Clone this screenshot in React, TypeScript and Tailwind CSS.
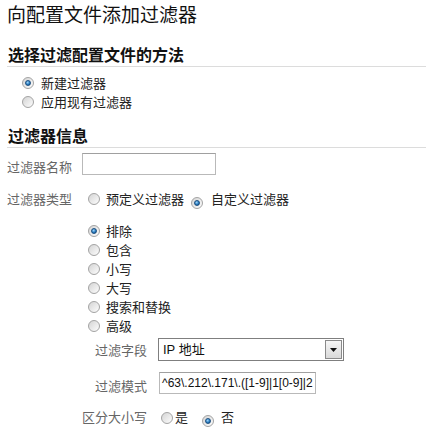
import React from "react";

function Radio({ checked }: { checked?: boolean }) {
  return (
    <span className="relative inline-flex h-[12px] w-[12px] shrink-0 items-center justify-center rounded-full border border-[#a3a3a3] bg-[linear-gradient(135deg,#d4d4d4,#fdfdfd)]">
      {checked && (
        <span className="h-[6px] w-[6px] rounded-full border border-[#1d4f80] bg-[radial-gradient(circle_at_40%_35%,#9fd4f7,#2a7fc4_55%,#0b3e6e)]" />
      )}
    </span>
  );
}

function Option({ checked, label }: { checked?: boolean; label: string }) {
  return (
    <div className="flex h-[19px] items-center">
      <Radio checked={checked} />
      <span className="ml-[6px] text-[13px] leading-[19px] text-[#222]">{label}</span>
    </div>
  );
}

export default function App() {
  const font = { fontFamily: '"Noto Sans CJK SC", "Liberation Sans", sans-serif' };
  return (
    <div className="h-[432px] w-[426px] overflow-hidden bg-white" style={font}>
      <h1 className="h-[28px] pl-[7px] text-[19px] leading-[28px] text-[#111]">
        向配置文件添加过滤器
      </h1>

      <h2 className="ml-[7px] mt-[16px] border-b border-[#dcdcdc] pb-[2px] pl-px text-[16px] font-bold leading-[20px] text-[#111]">
        选择过滤配置文件的方法
      </h2>
      <div className="mt-[6px] pl-[22px]">
        <div className="flex h-[19px] items-center">
          <Radio checked />
          <span className="ml-[7px] text-[13px] leading-[19px] text-[#222]">新建过滤器</span>
        </div>
        <div className="flex h-[19px] items-center">
          <Radio />
          <span className="ml-[7px] text-[13px] leading-[19px] text-[#222]">应用现有过滤器</span>
        </div>
      </div>

      <h2 className="ml-[7px] mt-[14px] border-b border-[#dcdcdc] pb-[2px] pl-px text-[16px] font-bold leading-[20px] text-[#111]">
        过滤器信息
      </h2>

      <div className="pl-[7px]">
        <div className="mt-[5px] flex items-start">
          <label className="w-[75px] pt-[3px] text-[13px] leading-[22px] text-[#666]">过滤器名称</label>
          <input
            className="h-[22px] w-[134px] border border-[#b9b9b9] border-t-[#a0a0a0] px-1 text-[13px] outline-none"
            type="text"
          />
        </div>

        <div className="mt-[11px] flex h-[19px] items-center">
          <label className="w-[81px] text-[13px] leading-[19px] text-[#666]">过滤器类型</label>
          <Radio />
          <span className="ml-[6px] text-[13px] leading-[19px] text-[#222]">预定义过滤器</span>
          <span className="ml-[7px]">
            <Radio checked />
          </span>
          <span className="ml-[8px] text-[13px] leading-[19px] text-[#222]">自定义过滤器</span>
        </div>

        <div className="mt-[13px] pl-[81px]">
          <Option checked label="排除" />
          <Option label="包含" />
          <Option label="小写" />
          <Option label="大写" />
          <Option label="搜索和替换" />
          <Option label="高级" />
        </div>

        <div className="mt-[3px] flex items-center">
          <label className="w-[140px] text-right text-[13px] leading-[22px] text-[#666]">过滤字段</label>
          <div className="ml-[11px] flex h-[23px] w-[186px] items-center border border-[#7f7f7f] bg-white">
            <span className="flex-1 pl-[4px] text-[13px] leading-[21px] text-[#111]" style={{ fontFamily: '"Liberation Sans", "Noto Sans CJK SC", sans-serif' }}>
              IP 地址
            </span>
            <span className="mr-px flex h-[19px] w-[17px] items-center justify-center border border-[#8a8a8a] bg-[linear-gradient(#f6f6f6,#d9d9d9)]">
              <svg width="7" height="4" viewBox="0 0 7 4">
                <path d="M0 0H7L3.5 4Z" fill="#111" />
              </svg>
            </span>
          </div>
        </div>

        <div className="mt-[11px] flex items-start">
          <label className="w-[140px] pt-[3px] text-right text-[13px] leading-[22px] text-[#666]">过滤模式</label>
          <div
            className="ml-[12px] h-[22px] w-[157px] overflow-hidden whitespace-nowrap border border-[#b9b9b9] border-t-[#a0a0a0] pl-[2px] text-[12px] leading-[20px] text-[#111]"
            style={{ fontFamily: '"Liberation Sans", sans-serif' }}
          >
            ^63\.212\.171\.([1-9]|1[0-9]|2
          </div>
        </div>

        <div className="mt-[10px] flex h-[19px] items-center">
          <label className="w-[140px] text-right text-[13px] leading-[19px] text-[#666]">区分大小写</label>
          <span className="ml-[14px]">
            <Radio />
          </span>
          <span className="ml-[2px] text-[13px] leading-[19px] text-[#222]">是</span>
          <span className="ml-[14px]">
            <Radio checked />
          </span>
          <span className="ml-[7px] text-[13px] leading-[19px] text-[#222]">否</span>
        </div>
      </div>
    </div>
  );
}
